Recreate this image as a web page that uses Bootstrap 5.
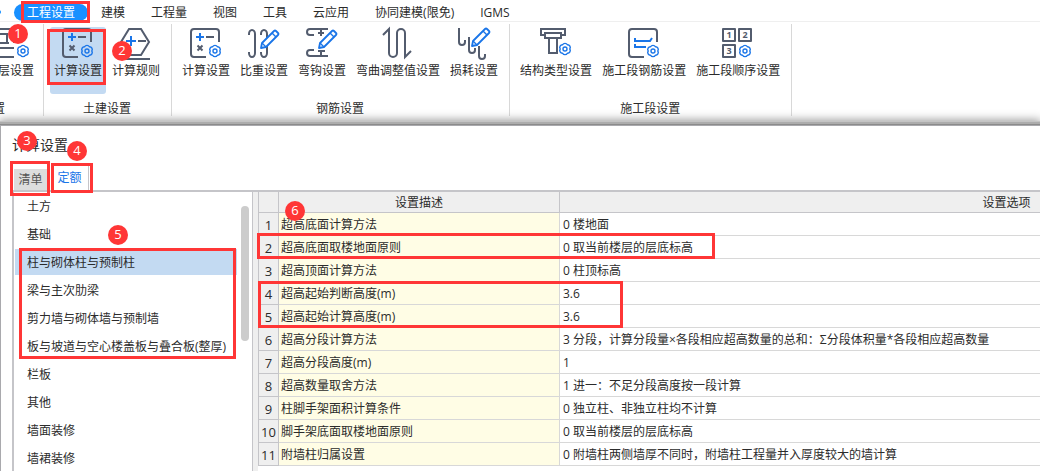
<!DOCTYPE html>
<html lang="zh-CN">
<head>
<meta charset="utf-8">
<meta name="viewport" content="width=device-width, initial-scale=1">
<title>计算设置</title>
<link href="https://cdn.jsdelivr.net/npm/bootstrap@5.3.0/dist/css/bootstrap.min.css" rel="stylesheet">
<style>
  :root { --hot: #ff3636; --line: #d8d8d8; --edge: #c5c5c9; --ink: #2b2b2b; --blue: #1a75e8; }
  body { font: 12px/18px "Open Sans", "Noto Sans CJK SC", sans-serif; color: var(--ink); background: #fff; }
  button { font: inherit; color: inherit; }

  /* ribbon tabs */
  .ribbon-tabs { height: 22px; padding: 4px 0 0 14px; border-bottom: 1px solid #efefef; }
  .ribbon-tabs .nav-link { padding: 0 13px; color: var(--ink); height: 17px; line-height: 17px; border-radius: 9px; white-space: nowrap; }
  .ribbon-tabs .nav-link.active { background: #1890ff; color: #fff; }
  .tab-stub { left: -3px; top: 10px; width: 4px; height: 4px; border-radius: 2px; background: #1890ff; }

  /* ribbon groups */
  .ribbon { padding-top: 2px; height: 103px; }
  .tool-group { padding: 3px 7px 0 6px; height: 92px; border-right: 1px solid var(--line); flex: none; }
  .tool-group.cut { width: 44px; padding-left: 0; overflow: hidden; }
  .tool-group.cut .tool { margin-left: -8px; width: 48px; }
  .tool-group.cut .group-name { margin-left: -7px; text-align: left; }
  .tool-row { gap: 2px; }
  .tool { display: flex; flex-direction: column; align-items: center; height: 67px; padding: 1px 4px 0; border: 0; background: none; border-radius: 3px; white-space: nowrap; }
  .tool.on { background: #c3daf2; }
  .tool svg { flex: none; margin-bottom: 2px; overflow: visible; }
  .group-name { text-align: center; padding-top: 6px; white-space: nowrap; }
  .k { fill: none; stroke: #535c6e; stroke-width: 2; }
  .b { fill: none; stroke: var(--blue); stroke-width: 2; }
  .t { fill: none; stroke: var(--blue); stroke-width: 1.4; stroke-linejoin: round; }
  .num { font: bold 9px "Open Sans", sans-serif; fill: #535c6e; text-anchor: middle; }

  /* dialog */
  .dialog { border: 1px solid #a9a9ad; border-width: 1px 0 0 1px; background: #fff;
    box-shadow: 0 -1px 0 #8b8b8b, 0 -3px 0 #acacac, 0 -4px 0 #c4c4c4, 0 -4px 9px 1px #999; min-height: 0; }
  .dialog h1 { font-size: 14px; line-height: 20px; margin: 9px 0 11px 11px; }
  .rule-tabs { padding-left: 13px; }
  .rule-tabs button { border: 0; height: 24px; background: #fff; padding: 0; }
  .rule-tabs .inv { width: 33px; background: #ddd; height: 21px; color: #555; padding-top: 2px; }
  .rule-tabs .quo { width: 42px; color: var(--blue); border-right: 1px solid var(--edge); padding-left: 4px; }
  .panes { margin-left: 11px; border: 2px solid var(--edge); border-width: 2px 0 0 2px; min-height: 0; }
  .side { width: 239px; flex: none; border-right: 1px solid var(--edge); }
  .kinds { padding: 1px 15px 0 1px; }
  .kinds button { display: block; width: 100%; border: 0; background: none; text-align: left; padding: 2px 12px 0; height: 26px; line-height: 24px; margin-bottom: 2px; white-space: nowrap; }
  .kinds button.on { background: #c3daf2; }
  .thumb { right: 3px; top: 14px; width: 8px; height: 135px; border-radius: 4px; background: #ccc; }
  .splitter { width: 5px; flex: none; background: #efefef; }
  .grid-wrap, .grid-pane { min-width: 0; }
  .grid-pane { overflow: hidden; }
  .rules { table-layout: fixed; width: 1196px; border-collapse: collapse; }
  .rules .c-no { width: 20px; }
  .rules .c-desc { width: 281px; }
  .rules th, .rules td { font-weight: 400; padding: 2px 3px 0; height: 23px; line-height: 20px; border: 1px solid var(--line); border-top: 0; white-space: nowrap; overflow: hidden; }
  .rules thead th { height: 21px; line-height: 18px; background: #efefef; text-align: center; border-color: var(--edge); }
  .rules tbody th { background: #efefef; text-align: center; padding: 2px 0 0; font-size: 13px; border-color: var(--edge); }
  .rules .desc { background: #fffde5; padding-left: 2px; }

  /* annotations */
  .frame { position: absolute; border: 3px solid var(--hot); pointer-events: none; z-index: 3; }
  .pin { position: absolute; width: 20px; height: 20px; border-radius: 50%; background: var(--hot); color: #fff; font-size: 13px; line-height: 19px; text-align: center; z-index: 4; }
  .f-tab { left: 7px; right: -2px; top: -3px; bottom: -2px; }
  .f-tool { left: -3px; right: 0; top: 2px; height: 56px; }
  .f-inv { left: -4px; right: -3px; top: -8px; bottom: -6px; }
  .f-quo { left: 4px; right: -5px; top: -3px; bottom: -3px; }
  .f-kinds { left: 5px; right: 16px; top: 56px; height: 111px; }
  .f-row2 { left: -1px; width: 458px; top: 41px; height: 26px; }
  .f-row4 { left: 0; width: 365px; top: 89px; height: 47px; }
  .p1 { left: 8px; top: 2px; }
  .p2 { left: 4px; top: 14px; }
  .p3 { left: 16px; top: 5px; }
  .p4 { left: 66px; top: 15px; }
  .p5 { left: 94px; top: 33px; }
  .p6 { left: 27px; top: 9px; }
</style>
</head>
<body class="vh-100 d-flex flex-column overflow-hidden">
<svg width="0" height="0" class="position-absolute" aria-hidden="true">
  <defs>
    <g id="gear"><path class="t" d="M4.800 0A2.700 2.700 0 0 1 2.400 4.200 2.700 2.700 0 0 1-2.400 4.200 2.700 2.700 0 0 1-4.800 0 2.700 2.700 0 0 1-2.400-4.200 2.700 2.700 0 0 1 2.400-4.200 2.700 2.700 0 0 1 4.800 0Z"/><circle class="t" r="2"/></g>
    <g id="pencil"><path d="M13 20 14 15 26 3Q27 2 28 3L30 5Q31 6 30 7L18 19Z" fill="#fff" stroke="#1a75e8" stroke-width="1.800" stroke-linejoin="round"/><path class="t" d="M24 5 28 9M14 15 18 19"/></g>
    <g id="calc"><path class="k" d="M16 29H4a3 3 0 0 1-3-3V4a3 3 0 0 1 3-3h22a3 3 0 0 1 3 3v10M16 9h8M7.500 17.500l5 5M12.500 17.500l-5 5"/><path class="b" d="M6 9h8M10 5v8"/><use href="#gear" x="25" y="23"/></g>
  </defs>
</svg>

<nav class="ribbon-tabs nav flex-nowrap position-relative">
  <span class="tab-stub position-absolute"></span>
  <a class="nav-link active position-relative" href="#">工程设置<span class="frame f-tab"></span></a>
  <a class="nav-link" href="#">建模</a>
  <a class="nav-link" href="#">工程量</a>
  <a class="nav-link" href="#">视图</a>
  <a class="nav-link" href="#">工具</a>
  <a class="nav-link" href="#">云应用</a>
  <a class="nav-link" href="#">协同建模(限免)</a>
  <a class="nav-link" href="#">IGMS</a>
</nav>

<div class="ribbon d-flex position-relative">
  <span class="pin p1">1</span>
  <section class="tool-group cut">
    <button class="tool" type="button"><svg width="32" height="32"><path class="k" d="M0 1H12a2 2 0 0 1 2 2V15M0 6H7V15M0 15H9M0 20H14M0 29H14"/><use href="#gear" x="23" y="23"/></svg>层设置</button>
    <div class="group-name">置</div>
  </section>
  <section class="tool-group">
    <div class="tool-row d-flex">
      <button class="tool on position-relative" type="button"><svg width="32" height="32"><use href="#calc"/></svg>计算设置<span class="frame f-tool"></span></button>
      <button class="tool position-relative" type="button"><svg width="32" height="32"><path class="k" d="M9 1H21L29 14 21 27H9L1 14ZM5 31H30M18 13h8"/><path class="b" d="M6 13H16M11 8V18"/></svg>计算规则<span class="pin p2">2</span></button>
    </div>
    <div class="group-name">土建设置</div>
  </section>
  <section class="tool-group">
    <div class="tool-row d-flex">
      <button class="tool" type="button"><svg width="32" height="32"><use href="#calc"/></svg>计算设置</button>
      <button class="tool" type="button"><svg width="32" height="32"><path class="k" d="M1 7V6a3 4 0 0 1 6 0V25a3 4 0 0 1-6 0V24M13 7V6a3 4 0 0 1 6 0V25a3 4 0 0 1-6 0V24"/><use href="#pencil"/></svg>比重设置</button>
      <button class="tool" type="button"><svg width="32" height="32"><path class="k" d="M8 7H4a3 3 0 0 1 0-6H22M8 22H4a3 3 0 0 0 0 6H22M15 1V8M12 5H18M15 22V27M12 23H19"/><use href="#pencil"/></svg>弯钩设置</button>
      <button class="tool" type="button"><svg width="32" height="32"><path class="k" d="M1 7 7 1V25a4 4 0 0 0 8 0V5a4 4 0 0 1 8 0V29l6-6"/></svg>弯曲调整值设置</button>
      <button class="tool" type="button"><svg width="32" height="32"><path class="k" d="M1 0V14a3 3 0 0 0 6 0V12M11 9V22a3 3 0 0 0 6 0V20M21 18V28a3 3 0 0 0 6 0V26"/><use href="#pencil" x="1" y="-2"/></svg>损耗设置</button>
    </div>
    <div class="group-name">钢筋设置</div>
  </section>
  <section class="tool-group">
    <div class="tool-row d-flex">
      <button class="tool" type="button"><svg width="32" height="32"><path class="k" d="M5 7H1V1H25V7H21M5 5H21V10H5ZM9 10V25H17V10"/><use href="#gear" x="25" y="21"/></svg>结构类型设置</button>
      <button class="tool" type="button"><svg width="32" height="32"><path class="k" d="M16 29H4a3 3 0 0 1-3-3V4a3 3 0 0 1 3-3h22a3 3 0 0 1 3 3v10"/><path class="b" d="M7 10V13H22L24 10M7 16V19H18"/><use href="#gear" x="25" y="23"/></svg>施工段钢筋设置</button>
      <button class="tool" type="button"><svg width="32" height="32"><path class="k" d="M1 1H13V13H1ZM17 1H29V13H17ZM1 17H13V29H1Z" stroke-linejoin="round"/><text class="num" x="7" y="10">1</text><text class="num" x="23" y="10">2</text><text class="num" x="7" y="26">3</text><use href="#gear" x="23" y="23"/></svg>施工段顺序设置</button>
    </div>
    <div class="group-name">施工段设置</div>
  </section>
</div>

<main class="dialog flex-grow-1 d-flex flex-column position-relative">
  <h1 class="fw-normal">计算设置</h1>
  <span class="pin p3">3</span>
  <span class="pin p4">4</span>
  <div class="rule-tabs d-flex align-items-end">
    <button class="inv position-relative" type="button">清单<span class="frame f-inv"></span></button>
    <button class="quo position-relative" type="button">定额<span class="frame f-quo"></span></button>
  </div>
  <div class="panes d-flex flex-grow-1">
    <div class="side position-relative">
      <div class="kinds">
        <button type="button">土方</button>
        <button type="button">基础</button>
        <button type="button" class="on">柱与砌体柱与预制柱</button>
        <button type="button">梁与主次肋梁</button>
        <button type="button">剪力墙与砌体墙与预制墙</button>
        <button type="button">板与坡道与空心楼盖板与叠合板(整厚)</button>
        <button type="button">栏板</button>
        <button type="button">其他</button>
        <button type="button">墙面装修</button>
        <button type="button">墙裙装修</button>
      </div>
      <span class="thumb position-absolute"></span>
      <span class="frame f-kinds"></span>
      <span class="pin p5">5</span>
    </div>
    <div class="splitter"></div>
    <div class="grid-wrap position-relative flex-grow-1 d-flex">
      <div class="grid-pane flex-grow-1">
        <table class="rules">
          <colgroup><col class="c-no"><col class="c-desc"><col></colgroup>
          <thead><tr><th></th><th>设置描述</th><th>设置选项</th></tr></thead>
          <tbody>
            <tr><th>1</th><td class="desc">超高底面计算方法</td><td>0 楼地面</td></tr>
            <tr><th>2</th><td class="desc">超高底面取楼地面原则</td><td>0 取当前楼层的层底标高</td></tr>
            <tr><th>3</th><td class="desc">超高顶面计算方法</td><td>0 柱顶标高</td></tr>
            <tr><th>4</th><td class="desc">超高起始判断高度(m)</td><td>3.6</td></tr>
            <tr><th>5</th><td class="desc">超高起始计算高度(m)</td><td>3.6</td></tr>
            <tr><th>6</th><td class="desc">超高分段计算方法</td><td>3 分段，计算分段量×各段相应超高数量的总和：Σ分段体积量*各段相应超高数量</td></tr>
            <tr><th>7</th><td class="desc">超高分段高度(m)</td><td>1</td></tr>
            <tr><th>8</th><td class="desc">超高数量取舍方法</td><td>1 进一：不足分段高度按一段计算</td></tr>
            <tr><th>9</th><td class="desc">柱脚手架面积计算条件</td><td>0 独立柱、非独立柱均不计算</td></tr>
            <tr><th>10</th><td class="desc">脚手架底面取楼地面原则</td><td>0 取当前楼层的层底标高</td></tr>
            <tr><th>11</th><td class="desc">附墙柱归属设置</td><td>0 附墙柱两侧墙厚不同时，附墙柱工程量并入厚度较大的墙计算</td></tr>
          </tbody>
        </table>
      </div>
      <span class="frame f-row2"></span>
      <span class="frame f-row4"></span>
      <span class="pin p6">6</span>
    </div>
  </div>
</main>
<script src="https://cdn.jsdelivr.net/npm/bootstrap@5.3.0/dist/js/bootstrap.bundle.min.js"></script>
</body>
</html>
